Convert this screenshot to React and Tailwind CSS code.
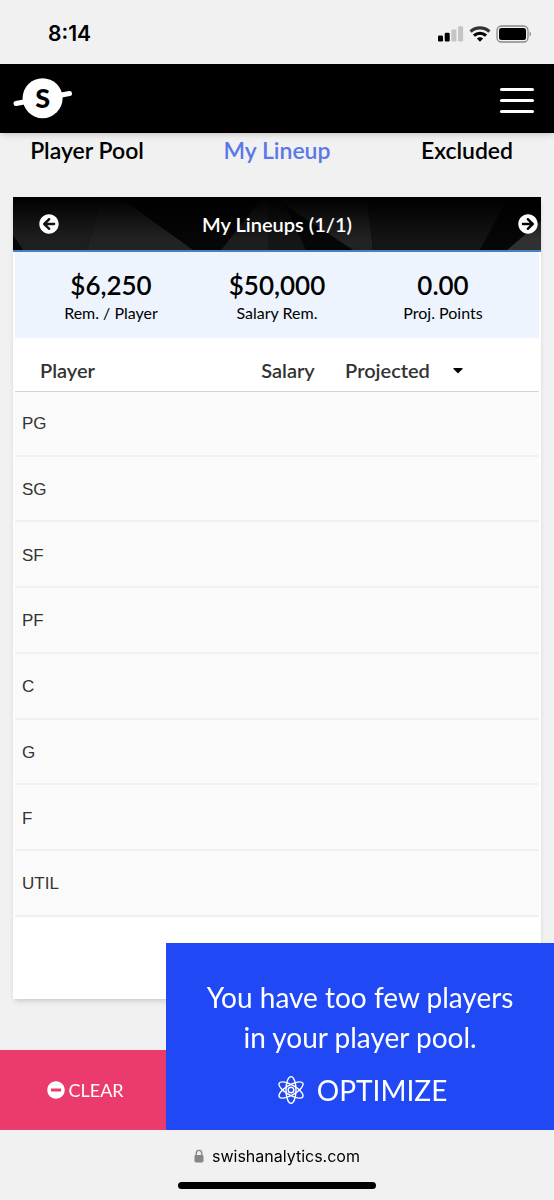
import { useState } from "react";
import { FaArrowCircleLeft, FaArrowCircleRight, FaMinusCircle, FaCaretDown } from "react-icons/fa";

const TABS = ["Player Pool", "My Lineup", "Excluded"];

const STATS = [
  { value: "$6,250", label: "Rem. / Player" },
  { value: "$50,000", label: "Salary Rem." },
  { value: "0.00", label: "Proj. Points" },
];

const POSITIONS = ["PG", "SG", "SF", "PF", "C", "G", "F", "UTIL"];

function StatusBar() {
  return (
    <div className="flex h-16 items-center justify-between pl-12 pr-[22px] pt-1">
      <span className="font-['Inter',sans-serif] text-[21px] font-semibold text-black">8:14</span>
      <div className="flex items-center gap-[5px]">
        {/* Signal */}
        <svg width="26" height="16" viewBox="0 0 26 16">
          <rect x="0" y="9.5" width="5" height="6" rx="1.2" fill="#000" />
          <rect x="6.7" y="6.8" width="5" height="8.7" rx="1.2" fill="#000" />
          <rect x="13.4" y="3.4" width="5" height="12.1" rx="1.2" fill="#c4c4c4" />
          <rect x="20.1" y="0.3" width="5" height="15.2" rx="1.2" fill="#c4c4c4" />
        </svg>
        {/* Wifi */}
        <svg width="22" height="16" viewBox="0 0 22 16" fill="none">
          <path d="M1.6 5.6a13.6 13.6 0 0 1 18.8 0" stroke="#333" strokeWidth="3.2" />
          <path d="M5 9.6a8.8 8.8 0 0 1 12 0" stroke="#000" strokeWidth="3.2" />
          <path d="M11 15.8l-3.1-3.2a4.6 4.6 0 0 1 6.2 0z" fill="#000" />
        </svg>
        {/* Battery */}
        <svg width="36" height="18" viewBox="0 0 36 18">
          <rect x="1" y="1" width="31" height="16" rx="4.5" fill="none" stroke="#888" strokeWidth="1.3" />
          <rect x="3" y="3" width="27" height="12" rx="2.5" fill="#000" />
          <path d="M33.6 6.5c1.8.6 1.8 4.4 0 5z" fill="#888" />
        </svg>
      </div>
    </div>
  );
}

function Logo() {
  return (
    <svg width="60" height="42" viewBox="0 0 60 42" role="img" aria-label="Swish Analytics">
      <path d="M4 25.5L57.5 15.5" stroke="#fff" strokeWidth="5" strokeLinecap="round" />
      <circle cx="30.6" cy="20.2" r="20" fill="#fff" />
      <text
        x="30.8"
        y="29.5"
        textAnchor="middle"
        fill="#000"
        className="font-['Lato',sans-serif] text-[27px] font-black"
      >
        S
      </text>
    </svg>
  );
}

function AtomIcon() {
  return (
    <svg width="28" height="30" viewBox="0 0 28 30" fill="none" stroke="#fff" strokeWidth="1.4">
      <ellipse cx="14" cy="15" rx="5" ry="13.4" />
      <ellipse cx="14" cy="15" rx="5" ry="13.6" transform="rotate(60 14 15)" />
      <ellipse cx="14" cy="15" rx="5" ry="13.6" transform="rotate(-60 14 15)" />
      <circle cx="14" cy="15" r="2.8" />
    </svg>
  );
}

function LineupHeader() {
  return (
    <div className="relative flex h-[55px] items-center justify-between border-b-2 border-[#4a7fc0] bg-black pl-[26px] pr-[3px] text-white">
      <svg
        className="absolute inset-0 h-full w-full"
        viewBox="0 0 528 53"
        preserveAspectRatio="none"
        aria-hidden="true"
      >
        <defs>
          <linearGradient id="shade" x1="0" y1="0" x2="0" y2="1">
            <stop offset="0" stopColor="#000" />
            <stop offset="1" stopColor="#000" stopOpacity="0" />
          </linearGradient>
        </defs>
        <rect width="528" height="53" fill="#060606" />
        <path d="M0 0H88L74 53H10L0 38z" fill="#1e1e1e" />
        <path d="M88 0H106L180 53H74z" fill="#222" />
        <path d="M250 0L208 53H255V0z" fill="#1d1d1d" />
        <path d="M255 0H268L293 53H255z" fill="#151515" />
        <path d="M275 10L340 53H360L354 0H265z" fill="#222" />
        <path d="M354 0H495L467 53H360z" fill="#141414" />
        <path d="M528 24V53H494z" fill="#303030" />
        <rect width="528" height="42" fill="url(#shade)" />
      </svg>
      <button className="relative" aria-label="Previous lineup">
        <FaArrowCircleLeft size={20} />
      </button>
      <h1 className="absolute inset-x-0 text-center text-[20px] font-semibold">My Lineups (1/1)</h1>
      <button className="relative" aria-label="Next lineup">
        <FaArrowCircleRight size={20} />
      </button>
    </div>
  );
}

function LineupTable() {
  return (
    <div className="mx-0.5">
      <table className="h-[579px] w-full border-collapse">
        <thead>
          <tr className="h-[53px] border-b border-[#d4d4d4] text-left text-[20px] text-[#333]">
            <th className="w-[47%] pl-[25px] pt-3 font-semibold">Player</th>
            <th className="w-[16%] pt-3 font-semibold">Salary</th>
            <th className="pt-3 font-semibold">
              <button className="flex items-center gap-5">
                Projected
                <FaCaretDown size={16} className="text-black" />
              </button>
            </th>
          </tr>
        </thead>
        <tbody>
          {POSITIONS.map((pos) => (
            <tr
              key={pos}
              className="border-b-2 border-[#f0f0f0] bg-[#fafafa] font-['Liberation_Sans',sans-serif] text-[17px] text-[#333]"
            >
              <td className="pl-[7px] pt-0.5">{pos}</td>
              <td></td>
              <td></td>
            </tr>
          ))}
        </tbody>
      </table>
    </div>
  );
}

function BottomBar() {
  return (
    <div className="fixed inset-x-0 bottom-0">
      <div className="flex items-end text-white">
        <button className="flex h-20 w-[30%] items-center justify-center gap-1 bg-[#eb3a6c] pl-1 text-[18px]">
          <FaMinusCircle size={18} />
          CLEAR
        </button>
        <button className="flex w-[70%] flex-col items-center bg-[#2048f5] px-8 pb-5 pt-[34px] text-[28px] leading-10">
          <span className="max-w-[310px]">You have too few players in your player pool.</span>
          <span className="mt-[13px] flex items-center gap-3 pl-1">
            <AtomIcon />
            OPTIMIZE
          </span>
        </button>
      </div>
      <div className="flex h-[70px] flex-col items-center justify-between bg-[#f1f1f1] pb-[11px] pt-[14px]">
        <a
          href="#"
          className="flex items-center gap-2 font-['Inter',sans-serif] text-[16px] text-black"
        >
          <svg width="10" height="14" viewBox="0 0 10 14">
            <path d="M2.3 7V4.1a2.7 2.7 0 0 1 5.4 0V7" fill="none" stroke="#85858a" strokeWidth="1.4" />
            <rect x="0.5" y="6" width="9" height="7.5" rx="1.4" fill="#85858a" />
          </svg>
          swishanalytics.com
        </a>
        <div className="h-[7px] w-[198px] rounded-full bg-black"></div>
      </div>
    </div>
  );
}

export default function App() {
  const [activeTab, setActiveTab] = useState("My Lineup");

  return (
    <div className="min-h-screen overflow-x-hidden bg-[#f1f1f1] pb-[200px] font-['Lato',sans-serif]">
      <StatusBar />

      {/* Site header */}
      <header className="flex h-[69px] items-center justify-between bg-black pl-3 pr-5 shadow-md">
        <a href="#">
          <Logo />
        </a>
        <button className="flex flex-col gap-2 pt-1" aria-label="Menu">
          <span className="h-[3px] w-[34px] rounded-full bg-white"></span>
          <span className="h-[3px] w-[34px] rounded-full bg-white"></span>
          <span className="h-[3px] w-[34px] rounded-full bg-white"></span>
        </button>
      </header>

      {/* Tabs */}
      <nav className="-mx-2 grid grid-cols-3 pt-px">
        {TABS.map((tab) => (
          <button
            key={tab}
            onClick={() => setActiveTab(tab)}
            className={
              tab === activeTab
                ? "text-[23px] font-semibold leading-8 text-[#5a78e8]"
                : "text-[23px] font-semibold leading-8 text-black"
            }
          >
            {tab}
          </button>
        ))}
      </nav>

      {/* Lineup card */}
      <main className="mx-[13px] mt-[31px] bg-white pb-[82px] shadow-md">
        <LineupHeader />
        <div className="mx-0.5 grid grid-cols-3 bg-[#edf4fd] px-[13px] pb-[13px] pt-[17px] text-center text-black">
          {STATS.map((stat) => (
            <div key={stat.label}>
              <div className="text-[26px] font-semibold leading-8">{stat.value}</div>
              <div className="text-[16px] leading-6">{stat.label}</div>
            </div>
          ))}
        </div>
        <LineupTable />
      </main>

      <BottomBar />
    </div>
  );
}
